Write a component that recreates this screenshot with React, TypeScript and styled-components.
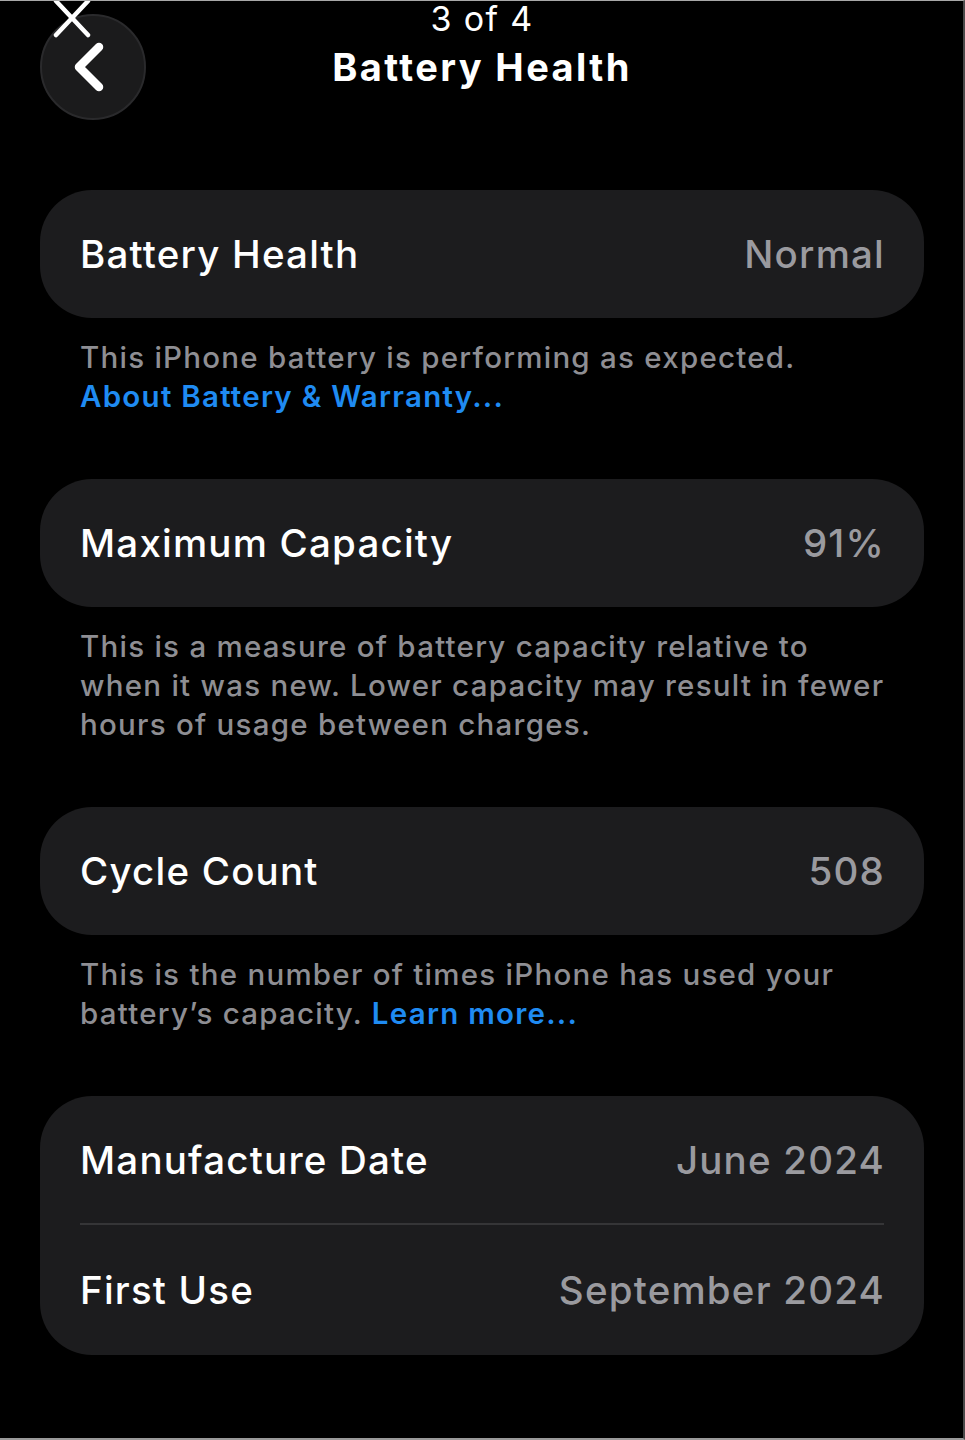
import React from "react";
import styled, { createGlobalStyle } from "styled-components";

const Global = createGlobalStyle`
  html, body { margin: 0; padding: 0; background: #000; }
  body { font-family: Inter, "Noto Sans", "Liberation Sans", sans-serif; -webkit-font-smoothing: antialiased; }
  * { box-sizing: border-box; }
`;

const Frame = styled.div`
  width: 965px;
  height: 1440px;
  background: #000;
  border-top: 1px solid #a8a8a8;
  border-bottom: 2px solid #9a9a9a;
  border-right: 2px solid #4a4a4a;
  overflow: hidden;
  color: #fff;
`;

const Page = styled.div`
  padding: 0 39px 0 40px;
`;

const Header = styled.header`
  position: relative;
  height: 189px;
  display: grid;
  grid-template-columns: 1fr auto 1fr;
  align-items: start;
`;

const BackButton = styled.button`
  margin-top: 13px;
  width: 106px;
  height: 106px;
  border-radius: 50%;
  background: #1b1b1c;
  border: 2px solid #2a2a2c;
  display: flex;
  align-items: center;
  justify-content: center;
  padding: 0 8px 0 0;
  cursor: pointer;
`;

const CloseIcon = styled.svg`
  position: absolute;
  left: 13px;
  top: -3px;
`;

const TitleBlock = styled.div`
  display: flex;
  flex-direction: column;
  align-items: center;
`;

const Counter = styled.div`
  font-size: 34px;
  line-height: 36px;
  font-weight: 400;
  letter-spacing: 1.3px;
`;

const Title = styled.h1`
  margin: 0;
  font-size: 38px;
  line-height: 60px;
  font-weight: 700;
  letter-spacing: 2.4px;
`;

const Section = styled.section`
  margin-bottom: 63px;
`;

const Card = styled.div`
  background: #1c1c1e;
  border-radius: 52px;
  overflow: hidden;
`;

const Row = styled.div<{ $h?: number }>`
  height: ${(p) => p.$h ?? 128}px;
  display: flex;
  align-items: center;
  justify-content: space-between;
  padding: 0 40px;
  font-size: 38.5px;
  letter-spacing: 1.2px;
`;

const Label = styled.span`
  color: #ffffff;
  font-weight: 500;
`;

const Value = styled.span`
  color: #9a9a9f;
  font-weight: 500;
  margin-right: -1px;
`;

const Divider = styled.div`
  height: 2px;
  background: #353537;
  margin: 0 40px;
`;

const Footer = styled.p`
  margin: 0;
  padding: 20px 0 0 40px;
  font-size: 29.5px;
  line-height: 39px;
  font-weight: 500;
  color: #8e8e93;
  letter-spacing: 1.25px;
  white-space: nowrap;
`;

const Link = styled.a`
  color: #1f8bf2;
  text-decoration: none;
  font-weight: 600;
`;

export default function App() {
  return (
    <>
      <Global />
      <Frame>
        <Page>
          <Header>
            <div>
              <BackButton aria-label="Back">
                <svg width="40" height="52" viewBox="0 0 40 52">
                  <path
                    d="M30 6 L10 26 L30 46"
                    fill="none"
                    stroke="#fff"
                    strokeWidth="8.5"
                    strokeLinecap="round"
                    strokeLinejoin="round"
                  />
                </svg>
              </BackButton>
            </div>
            <TitleBlock>
              <Counter>3 of 4</Counter>
              <Title>Battery Health</Title>
            </TitleBlock>
            <div />
            <CloseIcon width="38" height="40" viewBox="0 0 38 40">
              <path d="M3 3 L35 37 M35 3 L3 37" stroke="#fff" strokeWidth="4.5" strokeLinecap="round" />
            </CloseIcon>
          </Header>

          <Section>
            <Card>
              <Row>
                <Label>Battery Health</Label>
                <Value>Normal</Value>
              </Row>
            </Card>
            <Footer>
              This iPhone battery is performing as expected.
              <br />
              <Link href="#">About Battery &amp; Warranty...</Link>
            </Footer>
          </Section>

          <Section>
            <Card>
              <Row>
                <Label>Maximum Capacity</Label>
                <Value>91%</Value>
              </Row>
            </Card>
            <Footer>
              This is a measure of battery capacity relative to
              <br />
              when it was new. Lower capacity may result in fewer
              <br />
              hours of usage between charges.
            </Footer>
          </Section>

          <Section>
            <Card>
              <Row>
                <Label>Cycle Count</Label>
                <Value>508</Value>
              </Row>
            </Card>
            <Footer>
              This is the number of times iPhone has used your
              <br />
              battery’s capacity. <Link href="#">Learn more...</Link>
            </Footer>
          </Section>

          <Section>
            <Card>
              <Row $h={127}>
                <Label>Manufacture Date</Label>
                <Value>June 2024</Value>
              </Row>
              <Divider />
              <Row $h={130}>
                <Label>First Use</Label>
                <Value>September 2024</Value>
              </Row>
            </Card>
          </Section>
        </Page>
      </Frame>
    </>
  );
}
